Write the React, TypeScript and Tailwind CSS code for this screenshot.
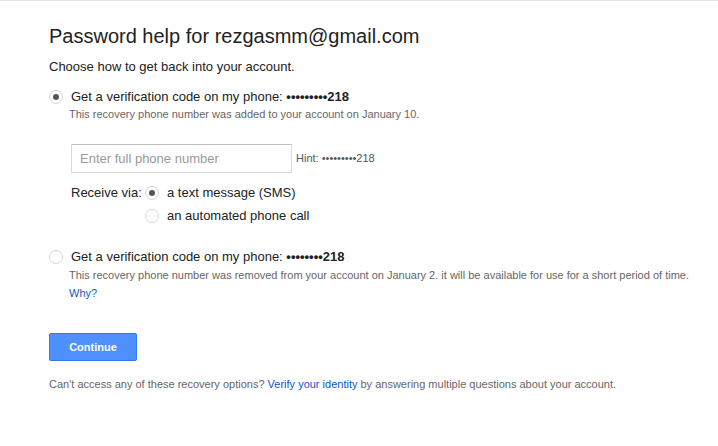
function Radio({ checked = false }: { checked?: boolean }) {
  return (
    <span className="flex h-[14px] w-[14px] shrink-0 items-center justify-center rounded-full border border-[#d6d6d6] bg-white">
      {checked && <span className="h-[6px] w-[6px] rounded-full bg-[#555]" />}
    </span>
  );
}

export default function App() {
  return (
    <div className="min-h-[446px] border-t border-[#e5e5e5] bg-white font-['Liberation_Sans',Arial,sans-serif] text-[#222]">
      <div className="pl-[49px] pt-[23px]">
        <h1 className="text-[20px] leading-[24px] font-normal">
          Password help for rezgasmm@gmail.com
        </h1>
        <p className="mt-[11px] text-[13px] leading-[16px]">
          Choose how to get back into your account.
        </p>

        <div className="mt-[14px] flex items-center">
          <Radio checked />
          <span className="ml-[8px] text-[13px] leading-[16px]">
            Get a verification code on my phone: <b>•••••••••218</b>
          </span>
        </div>
        <p className="mt-[2px] pl-[20px] text-[11px] leading-[14px] text-[#666]">
          This recovery phone number was added to your account on January 10.
        </p>

        <div className="pl-[22px]">
          <div className="mt-[23px] flex items-center">
            <input
              type="text"
              placeholder="Enter full phone number"
              className="h-[29px] w-[221px] border border-[#d9d9d9] border-t-[#c0c0c0] px-[8px] text-[13px] placeholder:text-[#999] outline-none"
            />
            <span className="ml-[4px] text-[11px] text-[#555]">Hint: •••••••••218</span>
          </div>

          <div className="mt-[12px] flex">
            <span className="w-[74px] text-[13px] leading-[16px]">Receive via:</span>
            <div className="flex flex-col gap-[7px]">
              <div className="flex items-center">
                <Radio checked />
                <span className="ml-[8px] text-[13px] leading-[16px]">a text message (SMS)</span>
              </div>
              <div className="flex items-center">
                <Radio />
                <span className="ml-[8px] text-[13px] leading-[16px]">an automated phone call</span>
              </div>
            </div>
          </div>
        </div>

        <div className="mt-[25px] flex items-center">
          <Radio />
          <span className="ml-[8px] text-[13px] leading-[16px]">
            Get a verification code on my phone: <b>••••••••218</b>
          </span>
        </div>
        <div className="pl-[20px] text-[11px] text-[#666]">
          <p className="mt-[3px] leading-[14px]">
            This recovery phone number was removed from your account on January 2. it will be available for use for a short period of time.
          </p>
          <a href="#" className="mt-[4px] block leading-[14px] text-[#15c]">
            Why?
          </a>
        </div>

        <button className="mt-[33px] h-[28px] w-[88px] rounded-[2px] border border-[#3079ed] bg-[#4d90fe] text-[11px] font-bold text-white">
          Continue
        </button>

        <p className="mt-[16px] text-[11px] leading-[14px] text-[#666]">
          Can't access any of these recovery options?{" "}
          <a href="#" className="text-[#15c]">Verify your identity</a> by answering multiple questions about your account.
        </p>
      </div>
    </div>
  );
}
